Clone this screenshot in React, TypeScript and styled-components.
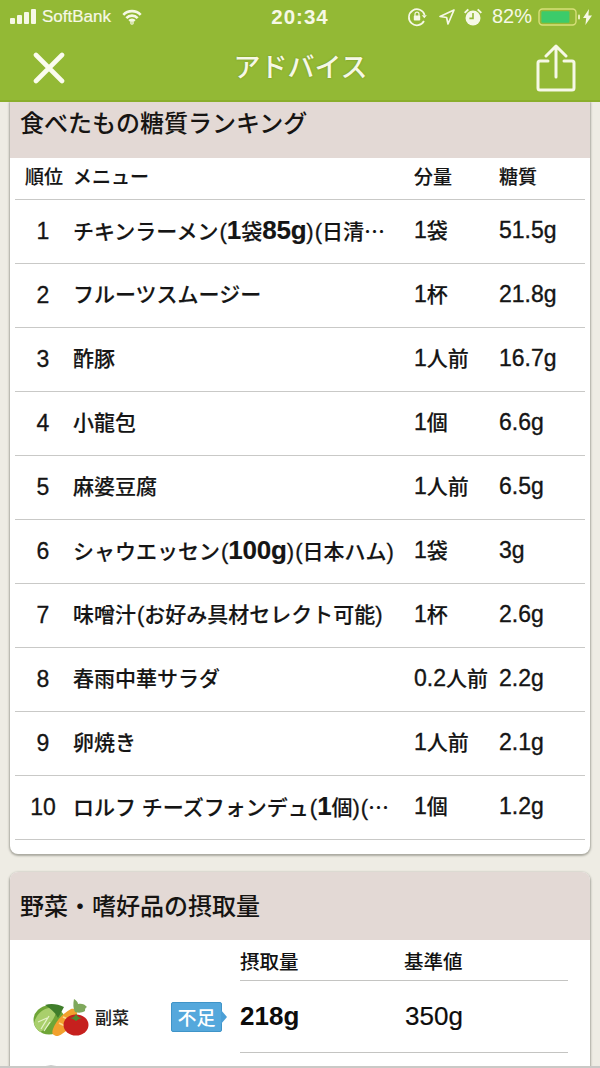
import React from 'react';
import styled, { createGlobalStyle } from 'styled-components';

const GlobalStyle = createGlobalStyle`
  html, body {
    margin: 0;
    padding: 0;
    background: #eeece4;
  }
  body {
    font-family: "Liberation Sans", "Noto Sans CJK JP", sans-serif;
    font-weight: 500;
    color: #111;
  }
`;

const Screen = styled.div`
  width: 600px;
  height: 1068px;
  display: flex;
  flex-direction: column;
  overflow: hidden;
  background: #eeece4;
`;

const Header = styled.header`
  flex: 0 0 102px;
  box-sizing: border-box;
  background: #93b935;
  border-bottom: 2px solid #8aae2c;
  display: flex;
  flex-direction: column;
  color: #f6f8e6;
`;

const StatusBar = styled.div`
  height: 33px;
  padding: 0 8px;
  display: grid;
  grid-template-columns: 1fr auto 1fr;
  align-items: center;
`;

const StatusGroup = styled.div<{ $end?: boolean }>`
  display: flex;
  align-items: center;
  justify-content: ${(p) => (p.$end ? 'flex-end' : 'flex-start')};
`;

const Carrier = styled.span`
  font-size: 17px;
  margin: 0 11px 0 5px;
  -webkit-text-stroke: 0.2px #f6f8e6;
`;

const Clock = styled.span`
  font-size: 20.5px;
  font-weight: 700;
  letter-spacing: 1px;
`;

const StatusGap = styled.span<{ $w: number }>`
  width: ${(p) => p.$w}px;
`;

const Percent = styled.span`
  font-size: 20px;
  margin: 0 6px 0 9px;
`;

const NavBar = styled.div`
  flex: 1;
  padding: 3px 24px 0 33px;
  display: flex;
  align-items: center;
  justify-content: space-between;
`;

const NavTitle = styled.h1`
  margin: 0;
  font-size: 27px;
  font-weight: 500;
  line-height: 1;
  text-shadow: 0 0 2px #6f8f1c;
`;

const Content = styled.main`
  flex: 1;
  min-height: 0;
  overflow: hidden;
  padding: 0 10px;
  display: flex;
  flex-direction: column;
  gap: 18px;
`;

const Card = styled.section<{ $open?: boolean }>`
  flex: none;
  background: #fff;
  border-radius: ${(p) => (p.$open ? '8px 8px 0 0' : '0 0 8px 8px')};
  box-shadow: 0 1px 2px 1px rgba(90, 90, 80, 0.45);
`;

const CardTitle = styled.h2<{ $tall?: boolean; $top?: boolean }>`
  margin: 0;
  box-sizing: border-box;
  height: ${(p) => (p.$tall ? 68 : 56)}px;
  padding: ${(p) => (p.$top ? '7px 10px 0' : '1px 10px 0')};
  display: flex;
  align-items: ${(p) => (p.$top ? 'flex-start' : 'center')};
  background: #e3d9d5;
  border-radius: ${(p) => (p.$tall ? '8px 8px 0 0' : '0')};
  font-size: 24px;
  font-weight: 500;
  line-height: 30px;
  color: #161412;
`;

const RankingTable = styled.div`
  padding: 0 5px 14px;
`;

const RankingRow = styled.div<{ $head?: boolean }>`
  height: ${(p) => (p.$head ? 42 : 64)}px;
  box-sizing: border-box;
  padding-bottom: 2px;
  display: grid;
  grid-template-columns: 58px 341px 85px 1fr;
  align-items: center;
  border-bottom: 1px solid #c9c9c7;
  font-size: ${(p) => (p.$head ? 19 : 21)}px;
  line-height: 30px;
  color: #151515;
  -webkit-text-stroke: 0.15px #151515;
`;

const RankCell = styled.span<{ $head?: boolean }>`
  text-align: center;
  padding-right: ${(p) => (p.$head ? 0 : 2)}px;
  font-size: ${(p) => (p.$head ? 19 : 23)}px;
  -webkit-text-stroke: ${(p) => (p.$head ? 0.15 : 0.3)}px #151515;
`;

const MenuCell = styled.span`
  white-space: nowrap;
  overflow: hidden;
`;

const BoldDigits = styled.span`
  font-size: 26px;
  font-weight: 700;
  letter-spacing: -0.2px;
`;

const Paren = styled.span<{ $open?: boolean }>`
  font-size: 22px;
  margin-left: ${(p) => (p.$open ? 1 : 0)}px;
  -webkit-text-stroke: 0.3px #151515;
`;

const Ellipsis = styled.span`
  font-family: "Noto Sans CJK JP", sans-serif;
  letter-spacing: -1px;
`;

const AmountCell = styled.span`
  white-space: nowrap;
`;

const Figure = styled.span`
  font-size: 23px;
  -webkit-text-stroke: 0.35px #151515;
`;

const IntakeBody = styled.div`
  padding-right: 22px;
`;

const IntakeHead = styled.div`
  height: 41px;
  margin-left: 230px;
  box-sizing: border-box;
  display: grid;
  grid-template-columns: 164px 1fr;
  align-items: center;
  border-bottom: 1px solid #c4c4c2;
  font-size: 19.5px;
  padding-top: 1px;
`;

const IntakeRow = styled.div`
  display: grid;
  grid-template-columns: 161px 69px 1fr;
  height: 71px;
  align-items: center;
`;

const FoodLabel = styled.div`
  display: flex;
  align-items: center;
  gap: 6px;
  padding-left: 23px;
  font-size: 17px;
  color: #222;
`;

const Badge = styled.span`
  position: relative;
  width: 51px;
  height: 30px;
  box-sizing: border-box;
  display: flex;
  align-items: center;
  justify-content: center;
  background: #55a8dc;
  border: 1px solid #3f94c8;
  border-radius: 2px;
  color: #fff;
  font-size: 19px;

  &::after {
    content: '';
    position: absolute;
    left: 100%;
    top: 7px;
    border-left: 6px solid #4b9fd6;
    border-top: 7px solid transparent;
    border-bottom: 7px solid transparent;
  }
`;

const IntakeValues = styled.div`
  height: 100%;
  display: grid;
  grid-template-columns: 164px 1fr;
  align-items: center;
  border-bottom: 1px solid #c4c4c2;
`;

const Value = styled.span<{ $bold?: boolean }>`
  font-size: 26px;
  font-weight: ${(p) => (p.$bold ? 700 : 400)};
  color: #0c0c0c;
  padding-left: ${(p) => (p.$bold ? 0 : 1)}px;
  -webkit-text-stroke: ${(p) => (p.$bold ? 0 : 0.2)}px #0c0c0c;
`;

const NextIcon = styled.div`
  width: 24px;
  height: 24px;
  margin: 13px 0 0 28px;
  border: 1px solid #ccc;
  border-radius: 50%;
`;

const BottomEdge = styled.div`
  flex: 0 0 2px;
  background: #c9c9c6;
`;

const MenuName = ({ text }: { text: string }) => (
  <>
    {text.split(/([0-9]+g?|[()…])/).map((part, i) => {
      if (/^[0-9]+g?$/.test(part)) return <BoldDigits key={i}>{part}</BoldDigits>;
      if (part === '(' || part === ')') return <Paren key={i} $open={part === '('}>{part}</Paren>;
      if (part === '…') return <Ellipsis key={i}>{part}</Ellipsis>;
      return part;
    })}
  </>
);

const Amount = ({ text }: { text: string }) => {
  const [, figure, unit] = text.match(/^([0-9.]+)(.*)$/) as RegExpMatchArray;
  return (
    <>
      <Figure>{figure}</Figure>
      {unit}
    </>
  );
};

const SignalIcon = () => (
  <svg width="29" height="18" viewBox="0 0 29 18" fill="#f6f8e6">
    <rect x="2" y="10" width="5" height="6" rx="1" />
    <rect x="9" y="7" width="5" height="9" rx="1" />
    <rect x="16" y="4" width="5" height="12" rx="1" />
    <rect x="23" y="1" width="5" height="15" rx="1" />
  </svg>
);

const WifiIcon = () => (
  <svg width="20" height="16" viewBox="0 0 23 18" fill="none" stroke="#f6f8e6" strokeWidth="3">
    <path d="M1.5 6.5a14 14 0 0 1 20 0" />
    <path d="M5 10.2a9 9 0 0 1 13 0" />
    <path d="M8.4 13.6a4.2 4.2 0 0 1 6.2 0" />
    <circle cx="11.5" cy="15.8" r="0.6" fill="#f6f8e6" />
  </svg>
);

const RotationIcon = () => (
  <svg width="21" height="20" viewBox="0 0 21 20" fill="none" stroke="#f6f8e6" strokeWidth="1.7">
    <path d="M17 14a8 8 0 1 1 .6-6" />
    <path d="M14.8 8.2h5l-2.5 3z" fill="#f6f8e6" stroke="none" />
    <rect x="6.8" y="8.6" width="6.4" height="5" rx="0.8" fill="#f6f8e6" stroke="none" />
    <path d="M8 9V7.2a2 2 0 0 1 4 0V9" strokeWidth="1.2" />
  </svg>
);

const LocationIcon = () => (
  <svg width="18" height="18" viewBox="0 0 18 18" fill="none" stroke="#f6f8e6" strokeWidth="1.7" strokeLinejoin="round">
    <path d="M16 2 2 8.5l6.6 1 1.4 6.5z" />
  </svg>
);

const AlarmIcon = () => (
  <svg width="20" height="20" viewBox="0 0 20 20" fill="#f6f8e6">
    <circle cx="10" cy="11" r="7.5" />
    <path d="M1 5.2 4.6 1.8 6 3 2.4 6.6zM19 5.2 15.4 1.8 14 3l3.6 3.6z" />
    <path d="M10 6v5.4H6.4" fill="none" stroke="#93b935" strokeWidth="1.6" />
  </svg>
);

const BatteryIcon = () => (
  <svg width="45" height="18" viewBox="0 0 45 18">
    <rect x="1" y="1" width="37" height="16" rx="3.5" fill="none" stroke="#d8df7a" strokeWidth="1.4" />
    <rect x="3.4" y="3.2" width="28" height="11.6" rx="1.2" fill="#3ccb6a" />
    <rect x="40" y="6.5" width="2" height="5" rx="1" fill="#e9efb8" />
  </svg>
);

const BoltIcon = () => (
  <svg width="9" height="16" viewBox="0 0 9 16" fill="#f6f8e6">
    <path d="M6 0 0 9h3.2L2.4 16 9 6.4H5.4z" />
  </svg>
);

const CloseIcon = () => (
  <svg width="32" height="32" viewBox="0 0 32 32" stroke="#fbfcef" strokeWidth="4.6" strokeLinecap="round">
    <path d="M3 3l26 26M29 3 3 29" />
  </svg>
);

const ShareIcon = () => (
  <svg width="40" height="48" viewBox="0 0 40 48" fill="none" stroke="#f6f8e6" strokeWidth="3" strokeLinecap="round" strokeLinejoin="round">
    <path d="M12 17H4a2 2 0 0 0-2 2v25a2 2 0 0 0 2 2h32a2 2 0 0 0 2-2V19a2 2 0 0 0-2-2h-8" />
    <path d="M20 33V2M10 12 20 2l10 10" />
  </svg>
);

const VegetableIcon = () => (
  <svg width="56" height="38" viewBox="0 0 56 38">
    <ellipse cx="16" cy="22" rx="15.5" ry="14.5" fill="#6fa537" />
    <path d="M1 25c3-11 12-17 23-15-1 10-9 20-17 24-3-2-5-5-6-9z" fill="#a9cf6c" />
    <path d="M8 31l8-13M5 24l9-4M11 33l6-9" stroke="#e4f1c8" strokeWidth="1.3" fill="none" />
    <path d="M12 7c6-2 13-1 19 2l-6 11c-3-6-8-10-13-13z" fill="#3f7d2a" />
    <path d="M21 37c-2-1-2-3-1-6 3-8 9-15 18-20 3-1 7 2 6 6-3 9-11 18-19 21-1 0-3 0-4-1z" fill="#f2a12e" />
    <path d="M30 19l7 3M26 25l6 3" stroke="#fcd98a" strokeWidth="1.8" />
    <path d="M42 14c-2-4-2-8-1-13 2 1 4 3 4 5 3-1 7 0 9 3-2 1-2 2-2 4-3 2-7 2-10 1z" fill="#7fa85c" />
    <ellipse cx="43" cy="27" rx="12.5" ry="10.5" fill="#c6201e" />
    <path d="M37 20c3 0 5-2 6-4 1 2 3 4 6 4l-3 1-3 2-3-2z" fill="#4f8a2e" />
  </svg>
);

const ranking = [
  ['チキンラーメン(1袋85g)(日清…', '1袋', '51.5g'],
  ['フルーツスムージー', '1杯', '21.8g'],
  ['酢豚', '1人前', '16.7g'],
  ['小龍包', '1個', '6.6g'],
  ['麻婆豆腐', '1人前', '6.5g'],
  ['シャウエッセン(100g)(日本ハム)', '1袋', '3g'],
  ['味噌汁(お好み具材セレクト可能)', '1杯', '2.6g'],
  ['春雨中華サラダ', '0.2人前', '2.2g'],
  ['卵焼き', '1人前', '2.1g'],
  ['ロルフ チーズフォンデュ(1個)(…', '1個', '1.2g'],
];

export default function App() {
  return (
    <Screen>
      <GlobalStyle />
      <Header>
        <StatusBar>
          <StatusGroup>
            <SignalIcon />
            <Carrier>SoftBank</Carrier>
            <WifiIcon />
          </StatusGroup>
          <Clock>20:34</Clock>
          <StatusGroup $end>
            <RotationIcon />
            <StatusGap $w={10} />
            <LocationIcon />
            <StatusGap $w={7} />
            <AlarmIcon />
            <Percent>82%</Percent>
            <BatteryIcon />
            <BoltIcon />
          </StatusGroup>
        </StatusBar>
        <NavBar>
          <CloseIcon />
          <NavTitle>アドバイス</NavTitle>
          <ShareIcon />
        </NavBar>
      </Header>
      <Content>
        <Card>
          <CardTitle $top>食べたもの糖質ランキング</CardTitle>
          <RankingTable>
            <RankingRow $head>
              <RankCell $head>順位</RankCell>
              <MenuCell>メニュー</MenuCell>
              <AmountCell>分量</AmountCell>
              <AmountCell>糖質</AmountCell>
            </RankingRow>
            {ranking.map(([menu, amount, sugar], i) => (
              <RankingRow key={menu}>
                <RankCell>{i + 1}</RankCell>
                <MenuCell><MenuName text={menu} /></MenuCell>
                <AmountCell><Amount text={amount} /></AmountCell>
                <AmountCell><Figure>{sugar}</Figure></AmountCell>
              </RankingRow>
            ))}
          </RankingTable>
        </Card>
        <Card $open>
          <CardTitle $tall>野菜・嗜好品の摂取量</CardTitle>
          <IntakeBody>
            <IntakeHead>
              <span>摂取量</span>
              <span>基準値</span>
            </IntakeHead>
            <IntakeRow>
              <FoodLabel>
                <VegetableIcon />
                副菜
              </FoodLabel>
              <Badge>不足</Badge>
              <IntakeValues>
                <Value $bold>218g</Value>
                <Value>350g</Value>
              </IntakeValues>
            </IntakeRow>
            <NextIcon />
          </IntakeBody>
        </Card>
      </Content>
      <BottomEdge />
    </Screen>
  );
}
